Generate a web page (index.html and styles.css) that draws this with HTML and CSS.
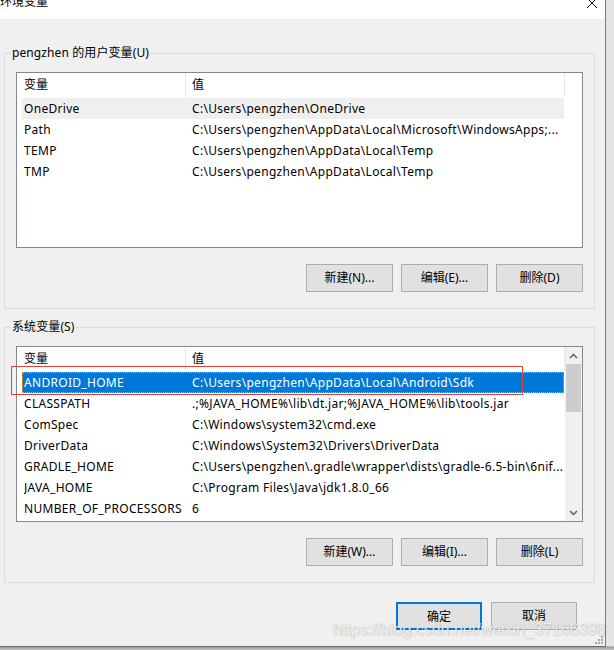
FILE: index.html
```html
<!DOCTYPE html>
<html lang="zh-CN">
<head>
<meta charset="utf-8">
<title>环境变量</title>
<link rel="stylesheet" href="styles.css">
</head>
<body>
<div class="window">
  <div class="titlebar">
    <span class="title">环境变量</span>
    <svg class="close" width="12" height="12" viewBox="0 0 12 12"><path d="M1 1 L11 11 M11 1 L1 11" stroke="#111" stroke-width="1" fill="none"/></svg>
  </div>

  <fieldset class="group">
    <legend class="group-label">pengzhen 的用户变量(U)</legend>
    <div class="listbox user-list">
      <div class="lv-main">
        <div class="lv-header">
          <div class="hcell">变量</div>
          <div class="hcell hcell-val">值</div>
        </div>
        <div class="lv-row hover"><span>OneDrive</span><span>C:\Users\pengzhen\OneDrive</span></div>
        <div class="lv-row"><span>Path</span><span>C:\Users\pengzhen\AppData\Local\Microsoft\WindowsApps;...</span></div>
        <div class="lv-row"><span>TEMP</span><span>C:\Users\pengzhen\AppData\Local\Temp</span></div>
        <div class="lv-row"><span>TMP</span><span>C:\Users\pengzhen\AppData\Local\Temp</span></div>
      </div>
    </div>
    <div class="btn-row">
      <button class="btn">新建(N)...</button>
      <button class="btn">编辑(E)...</button>
      <button class="btn">删除(D)</button>
    </div>
  </fieldset>

  <fieldset class="group group-sys">
    <legend class="group-label">系统变量(S)</legend>
    <div class="listbox sys-list">
      <div class="lv-main">
        <div class="lv-header">
          <div class="hcell">变量</div>
          <div class="hcell hcell-val">值</div>
        </div>
        <div class="lv-row selected"><span>ANDROID_HOME</span><span>C:\Users\pengzhen\AppData\Local\Android\Sdk</span></div>
        <div class="lv-row"><span>CLASSPATH</span><span>.;%JAVA_HOME%\lib\dt.jar;%JAVA_HOME%\lib\tools.jar</span></div>
        <div class="lv-row"><span>ComSpec</span><span>C:\Windows\system32\cmd.exe</span></div>
        <div class="lv-row"><span>DriverData</span><span>C:\Windows\System32\Drivers\DriverData</span></div>
        <div class="lv-row"><span>GRADLE_HOME</span><span>C:\Users\pengzhen\.gradle\wrapper\dists\gradle-6.5-bin\6nif...</span></div>
        <div class="lv-row"><span>JAVA_HOME</span><span>C:\Program Files\Java\jdk1.8.0_66</span></div>
        <div class="lv-row"><span>NUMBER_OF_PROCESSORS</span><span>6</span></div>
      </div>
      <div class="scrollbar">
        <div class="sb-arrow"><svg width="9" height="6" viewBox="0 0 9 6"><path d="M1 5 L4.5 1.5 L8 5" stroke="#606060" stroke-width="1.5" fill="none"/></svg></div>
        <div class="sb-thumb"></div>
        <div class="sb-track"></div>
        <div class="sb-arrow"><svg width="9" height="6" viewBox="0 0 9 6"><path d="M1 1 L4.5 4.5 L8 1" stroke="#606060" stroke-width="1.5" fill="none"/></svg></div>
      </div>
    </div>
    <div class="btn-row">
      <button class="btn">新建(W)...</button>
      <button class="btn">编辑(I)...</button>
      <button class="btn">删除(L)</button>
    </div>
  </fieldset>

  <div class="footer">
    <button class="btn btn-default">确定</button>
    <button class="btn">取消</button>
  </div>

  <div class="annotation"></div>
  <div class="watermark">https://blog.csdn.net/weixin_37166398</div>
  <svg class="grip" width="9" height="9" viewBox="0 0 9 9">
    <rect x="7" y="1" width="2" height="2" fill="#a8a8a8"/>
    <rect x="4" y="4" width="2" height="2" fill="#a8a8a8"/>
    <rect x="7" y="4" width="2" height="2" fill="#a8a8a8"/>
    <rect x="1" y="7" width="2" height="2" fill="#a8a8a8"/>
    <rect x="4" y="7" width="2" height="2" fill="#a8a8a8"/>
    <rect x="7" y="7" width="2" height="2" fill="#a8a8a8"/>
  </svg>
</div>
</body>
</html>
```
FILE: styles.css
```css
html, body {
  margin: 0;
  padding: 0;
}
body {
  background: linear-gradient(to bottom, #e4e4e4 0, #e4e4e4 646px, #9a9a9a 647px, #c8c8c8 650px);
  font-family: "Noto Sans", "Noto Sans CJK SC", sans-serif;
  font-size: 12px;
  color: #000;
  width: 614px;
  height: 650px;
  overflow: hidden;
}
.window {
  position: relative;
  width: 605px;
  height: 646px;
  background: #f0f0f0;
  border-right: 1px solid #7a7a7a;
  border-bottom: 1px solid #6e6e6e;
  display: flex;
  flex-direction: column;
}
.titlebar {
  height: 19px;
  background: #fff;
  display: flex;
  justify-content: space-between;
  align-items: flex-start;
  overflow: hidden;
}
.title {
  font-size: 12px;
  line-height: 14px;
  margin-top: -5px;
}
.close {
  margin-top: -3px;
  margin-right: 7px;
}
.group {
  margin: 26px 0 0 4px;
  width: 591px;
  box-sizing: border-box;
  border: 1px solid #dcdcdc;
  padding: 11px 11px 16px 11px;
  min-width: 0;
}
.group-sys {
  margin-top: 10px;
}
.group-label {
  margin-left: -5px;
  padding: 0 1px;
  line-height: 16px;
  font-size: 12px;
  letter-spacing: 0.1px;
}
.listbox {
  width: 567px;
  box-sizing: border-box;
  border: 1px solid #828790;
  background: #fff;
  display: flex;
  overflow: hidden;
}
.user-list {
  height: 176px;
}
.sys-list {
  height: 176px;
}
.lv-main {
  width: 548px;
  flex: none;
}
.lv-header {
  display: grid;
  grid-template-columns: 169px 1fr;
  height: 24px;
  margin-bottom: 1px;
}
.hcell {
  line-height: 24px;
  padding-left: 7px;
  border-right: 1px solid #e5e5e5;
}
.hcell-val {
  padding-left: 6px;
}
.lv-row {
  display: grid;
  grid-template-columns: 168px 1fr;
  height: 21px;
  line-height: 21px;
  width: 542px;
  margin-left: 5px;
  padding-left: 2px;
  box-sizing: border-box;
  white-space: nowrap;
  letter-spacing: 0.3px;
}
.lv-row span {
  overflow: hidden;
}
.lv-row.hover {
  background: #efefef;
}
.lv-row.selected {
  background: #0078d7;
  color: #fff;
  outline: 1px dotted #f7a34a;
  outline-offset: -1px;
}
.scrollbar {
  width: 17px;
  flex: none;
  background: #f0f0f0;
  display: flex;
  flex-direction: column;
}
.sb-arrow {
  height: 17px;
  display: flex;
  align-items: center;
  justify-content: center;
}
.sb-thumb {
  height: 48px;
  margin: 0 1px;
  background: #cdcdcd;
}
.sb-track {
  flex: 1;
}
.btn-row {
  display: flex;
  justify-content: flex-end;
  gap: 8px;
  margin-top: 16px;
  width: 567px;
}
.btn {
  width: 87px;
  height: 28px;
  box-sizing: border-box;
  background: #e1e1e1;
  border: 1px solid #adadad;
  font-family: "Noto Sans", "Noto Sans CJK SC", sans-serif;
  font-size: 12px;
  color: #000;
  padding: 0;
  line-height: 26px;
}
.footer {
  display: flex;
  justify-content: flex-end;
  gap: 9px;
  margin-top: 19px;
  padding-right: 28px;
}
.footer .btn {
  width: 86px;
}
.btn-default {
  border: 2px solid #0078d7;
}
.annotation {
  position: absolute;
  left: 11px;
  top: 366px;
  width: 512px;
  height: 29px;
  box-sizing: border-box;
  border: 1px solid #e5413b;
}
.watermark {
  position: absolute;
  left: 333px;
  top: 620px;
  font-family: "Liberation Sans", Arial, sans-serif;
  font-size: 16px;
  line-height: 20px;
  color: rgba(255, 255, 255, 0.85);
  text-shadow: 0 0 1px rgba(0, 0, 0, 0.3), 1px 1px 1px rgba(0, 0, 0, 0.1);
  white-space: nowrap;
}
.grip {
  position: absolute;
  right: 2px;
  bottom: 2px;
}
```
